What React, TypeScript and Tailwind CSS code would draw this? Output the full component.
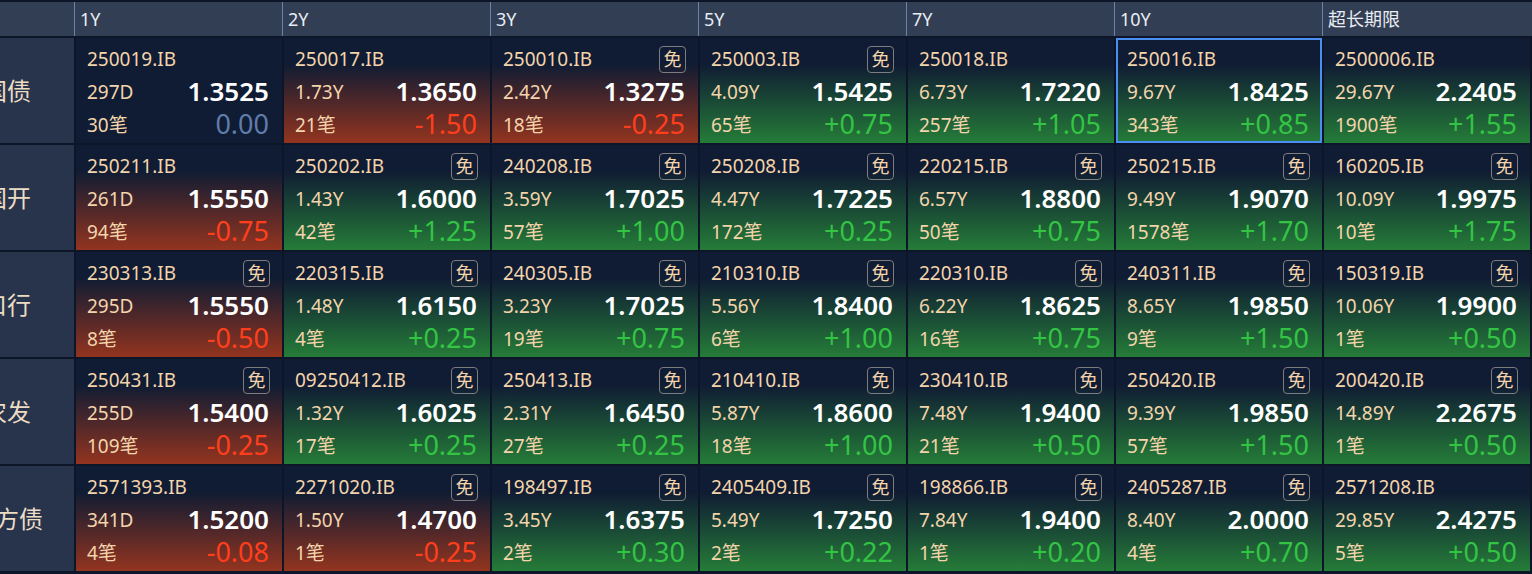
import React from "react";

type Quote = {
  code: string;
  free?: boolean;
  term: string;
  yld: string;
  count: string;
  chg: string;
  active?: boolean;
};

const tenors = ["1Y", "2Y", "3Y", "5Y", "7Y", "10Y", "超长期限"];

const rows: { label: string; quotes: Quote[] }[] = [
  {
    label: "国债",
    quotes: [
      { code: "250019.IB", term: "297D", yld: "1.3525", count: "30笔", chg: "0.00" },
      { code: "250017.IB", term: "1.73Y", yld: "1.3650", count: "21笔", chg: "-1.50" },
      { code: "250010.IB", free: true, term: "2.42Y", yld: "1.3275", count: "18笔", chg: "-0.25" },
      { code: "250003.IB", free: true, term: "4.09Y", yld: "1.5425", count: "65笔", chg: "+0.75" },
      { code: "250018.IB", term: "6.73Y", yld: "1.7220", count: "257笔", chg: "+1.05" },
      { code: "250016.IB", term: "9.67Y", yld: "1.8425", count: "343笔", chg: "+0.85", active: true },
      { code: "2500006.IB", term: "29.67Y", yld: "2.2405", count: "1900笔", chg: "+1.55" },
    ],
  },
  {
    label: "国开",
    quotes: [
      { code: "250211.IB", term: "261D", yld: "1.5550", count: "94笔", chg: "-0.75" },
      { code: "250202.IB", free: true, term: "1.43Y", yld: "1.6000", count: "42笔", chg: "+1.25" },
      { code: "240208.IB", free: true, term: "3.59Y", yld: "1.7025", count: "57笔", chg: "+1.00" },
      { code: "250208.IB", free: true, term: "4.47Y", yld: "1.7225", count: "172笔", chg: "+0.25" },
      { code: "220215.IB", free: true, term: "6.57Y", yld: "1.8800", count: "50笔", chg: "+0.75" },
      { code: "250215.IB", free: true, term: "9.49Y", yld: "1.9070", count: "1578笔", chg: "+1.70" },
      { code: "160205.IB", free: true, term: "10.09Y", yld: "1.9975", count: "10笔", chg: "+1.75" },
    ],
  },
  {
    label: "口行",
    quotes: [
      { code: "230313.IB", free: true, term: "295D", yld: "1.5550", count: "8笔", chg: "-0.50" },
      { code: "220315.IB", free: true, term: "1.48Y", yld: "1.6150", count: "4笔", chg: "+0.25" },
      { code: "240305.IB", free: true, term: "3.23Y", yld: "1.7025", count: "19笔", chg: "+0.75" },
      { code: "210310.IB", free: true, term: "5.56Y", yld: "1.8400", count: "6笔", chg: "+1.00" },
      { code: "220310.IB", free: true, term: "6.22Y", yld: "1.8625", count: "16笔", chg: "+0.75" },
      { code: "240311.IB", free: true, term: "8.65Y", yld: "1.9850", count: "9笔", chg: "+1.50" },
      { code: "150319.IB", free: true, term: "10.06Y", yld: "1.9900", count: "1笔", chg: "+0.50" },
    ],
  },
  {
    label: "农发",
    quotes: [
      { code: "250431.IB", free: true, term: "255D", yld: "1.5400", count: "109笔", chg: "-0.25" },
      { code: "09250412.IB", free: true, term: "1.32Y", yld: "1.6025", count: "17笔", chg: "+0.25" },
      { code: "250413.IB", free: true, term: "2.31Y", yld: "1.6450", count: "27笔", chg: "+0.25" },
      { code: "210410.IB", free: true, term: "5.87Y", yld: "1.8600", count: "18笔", chg: "+1.00" },
      { code: "230410.IB", free: true, term: "7.48Y", yld: "1.9400", count: "21笔", chg: "+0.50" },
      { code: "250420.IB", free: true, term: "9.39Y", yld: "1.9850", count: "57笔", chg: "+1.50" },
      { code: "200420.IB", free: true, term: "14.89Y", yld: "2.2675", count: "1笔", chg: "+0.50" },
    ],
  },
  {
    label: "地方债",
    quotes: [
      { code: "2571393.IB", term: "341D", yld: "1.5200", count: "4笔", chg: "-0.08" },
      { code: "2271020.IB", free: true, term: "1.50Y", yld: "1.4700", count: "1笔", chg: "-0.25" },
      { code: "198497.IB", free: true, term: "3.45Y", yld: "1.6375", count: "2笔", chg: "+0.30" },
      { code: "2405409.IB", free: true, term: "5.49Y", yld: "1.7250", count: "2笔", chg: "+0.22" },
      { code: "198866.IB", free: true, term: "7.84Y", yld: "1.9400", count: "1笔", chg: "+0.20" },
      { code: "2405287.IB", free: true, term: "8.40Y", yld: "2.0000", count: "4笔", chg: "+0.70" },
      { code: "2571208.IB", term: "29.85Y", yld: "2.4275", count: "5笔", chg: "+0.50" },
    ],
  },
];

function QuoteCell({ q }: { q: Quote }) {
  const up = q.chg.startsWith("+");
  const down = q.chg.startsWith("-");
  const bg = up
    ? "bg-[linear-gradient(to_bottom,#101c33_25%,#257c38_100%)]"
    : down
      ? "bg-[linear-gradient(to_bottom,#101c33_25%,#93341f_100%)]"
      : "bg-[#101c33]";
  const chgColor = up ? "text-[#33c444]" : down ? "text-[#ff3f1c]" : "text-[#5f7cab]";

  return (
    <div
      className={`relative h-[105px] pl-[11px] pr-[13px] pt-[7px] ${bg} ${
        q.active ? "outline-2 -outline-offset-2 outline-[#4a8ef2]" : ""
      }`}
    >
      <div className="flex h-[28px] items-center justify-between">
        <span className="text-[19px] text-[#f3d4ab]">{q.code}</span>
        {q.free ? (
          <span className="-mr-[1px] flex h-[27px] w-[27px] items-center justify-center rounded-[4px] border border-[#7d7d80] text-[18px] leading-none text-[#f3d4ab]">
            免
          </span>
        ) : null}
      </div>
      <div className="mt-[3px] flex h-[33px] items-center justify-between">
        <span className="text-[19px] text-[#f3d4ab]">{q.term}</span>
        <span className="-translate-y-[2px] text-[26px] font-semibold text-white">{q.yld}</span>
      </div>
      <div className="flex h-[33px] items-center justify-between">
        <span className="text-[19px] text-[#f3d4ab]">{q.count}</span>
        <span className={`-translate-y-[2px] text-[27px] ${chgColor}`}>{q.chg}</span>
      </div>
    </div>
  );
}

export default function App() {
  return (
    <div
      className="h-[574px] w-[1532px] overflow-hidden bg-[#0c1628] pt-[2px] leading-none"
      style={{ fontFamily: '"Noto Sans", "Noto Sans CJK SC", sans-serif' }}
    >
      {/* header */}
      <div className="flex h-[34px] bg-[#323e53]">
        <div className="w-[74px]" />
        {tenors.map((t) => (
          <div
            key={t}
            className="flex w-[208px] items-center border-l border-[#6c82a6] pl-[5px] text-[18px] text-[#e9edf3]"
          >
            {t}
          </div>
        ))}
      </div>

      {/* body */}
      <div className="mt-[2px] grid grid-cols-[74px_repeat(7,206px)] gap-[2px]">
        {rows.map((r) => (
          <React.Fragment key={r.label}>
            <div className="flex h-[105px] items-center overflow-hidden bg-[#27344c]">
              <div className="-ml-[63px] w-[140px] shrink-0 text-center text-[24px] text-[#ecdcc4]">
                {r.label}
              </div>
            </div>
            {r.quotes.map((q) => (
              <QuoteCell key={q.code} q={q} />
            ))}
          </React.Fragment>
        ))}
      </div>
    </div>
  );
}
